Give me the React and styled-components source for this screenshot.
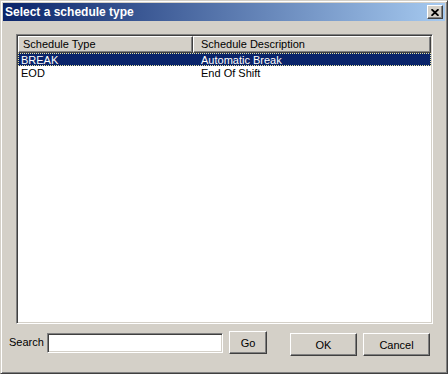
import React from 'react'
import styled, { createGlobalStyle } from 'styled-components'

const GlobalStyle = createGlobalStyle`
  html, body {
    margin: 0;
    padding: 0;
    background: #d4d0c8;
    font-family: "Liberation Sans", Arial, sans-serif;
  }
`;

const Window = styled.div`
  width: 448px;
  height: 374px;
  box-sizing: border-box;
  background: #d4d0c8;
  border: 1px solid;
  border-color: #d4d0c8 #404040 #404040 #d4d0c8;
  box-shadow: inset 1px 1px #ffffff, inset -1px -1px #808080;
  padding: 2px;
  display: flex;
  flex-direction: column;
`;

const TitleBar = styled.div`
  height: 18px;
  flex: none;
  display: flex;
  align-items: center;
  justify-content: space-between;
  padding: 0 2px 0 2px;
  background: linear-gradient(to right, #0a246a, #a6caf0);
`;

const Title = styled.span`
  color: #ffffff;
  font-weight: bold;
  font-size: 12px;
  line-height: 18px;
`;

const CloseButton = styled.div`
  width: 16px;
  height: 14px;
  box-sizing: border-box;
  background: #d4d0c8;
  border: 1px solid;
  border-color: #ffffff #404040 #404040 #ffffff;
  box-shadow: inset -1px -1px #808080;
  display: flex;
  align-items: center;
  justify-content: center;
  padding-right: 1px;
`;

const Body = styled.div`
  padding: 13px 12px 0 13px;
`;

const ListBox = styled.div`
  height: 290px;
  box-sizing: border-box;
  background: #ffffff;
  border: 1px solid;
  border-color: #808080 #ffffff #ffffff #808080;
  box-shadow: inset 1px 1px #404040, inset -1px -1px #d4d0c8;
  padding: 1px;
`;

const Header = styled.div`
  display: flex;
  height: 17px;
`;

const HeaderCell = styled.div`
  width: ${p => p.$width}px;
  box-sizing: border-box;
  background: #d4d0c8;
  border: 1px solid;
  border-color: #ffffff #404040 #404040 #ffffff;
  box-shadow: inset -1px -1px #808080;
  padding-left: ${p => p.$pad}px;
  font-size: 11px;
  line-height: 15px;
  color: #000;
  white-space: nowrap;
`;

const Row = styled.div`
  display: flex;
  height: 13px;
  box-sizing: border-box;
  font-size: 11px;
  line-height: 12px;
  background: ${p => (p.$selected ? '#0a246a' : 'transparent')};
  color: ${p => (p.$selected ? '#ffffff' : '#000000')};
  border: 1px dotted ${p => (p.$selected ? '#e8e4a0' : 'transparent')};
`;

const Cell = styled.div`
  width: ${p => p.$width}px;
  box-sizing: border-box;
  padding-left: ${p => p.$pad}px;
  white-space: nowrap;
`;

const Footer = styled.div`
  display: flex;
  align-items: flex-start;
  padding: 7px 0 0 6px;
`;

const Label = styled.span`
  width: 38px;
  flex: none;
  font-size: 11px;
  margin-top: 5px;
  line-height: 13px;
`;

const Input = styled.input`
  width: 176px;
  height: 20px;
  box-sizing: border-box;
  margin: 2px 0 0 0;
  border: 1px solid;
  border-color: #808080 #ffffff #ffffff #808080;
  box-shadow: inset 1px 1px #404040, inset -1px -1px #d4d0c8;
  background: #fff;
  outline: none;
  padding: 0 3px;
  font-family: "Liberation Sans", Arial, sans-serif;
  font-size: 11px;
`;

const Button = styled.button`
  width: ${p => p.$width}px;
  height: 23px;
  box-sizing: border-box;
  margin-left: ${p => p.$gap}px;
  margin-top: ${p => p.$top}px;
  padding: 0;
  background: #d4d0c8;
  border: 1px solid;
  border-color: #ffffff #404040 #404040 #ffffff;
  box-shadow: inset -1px -1px #808080;
  font-family: "Liberation Sans", Arial, sans-serif;
  font-size: 11px;
  color: #000;
`;

const rows = [
  { type: 'BREAK', desc: 'Automatic Break' },
  { type: 'EOD', desc: 'End Of Shift' },
];

export default function App() {
  return (
    <>
      <GlobalStyle />
      <Window>
        <TitleBar>
          <Title>Select a schedule type</Title>
          <CloseButton>
            <svg width="8" height="7" viewBox="0 0 8 7">
              <path d="M0.5 0.2 L7.5 6.8 M7.5 0.2 L0.5 6.8" stroke="#000" strokeWidth="1.8" />
            </svg>
          </CloseButton>
        </TitleBar>
        <Body>
          <ListBox>
            <Header>
              <HeaderCell $width={175} $pad={4}>Schedule Type</HeaderCell>
              <HeaderCell $width={238} $pad={7}>Schedule Description</HeaderCell>
            </Header>
            {rows.map((r, i) => (
              <Row key={r.type} $selected={i === 0}>
                <Cell $width={180} $pad={2}>{r.type}</Cell>
                <Cell $width={230} $pad={2}>{r.desc}</Cell>
              </Row>
            ))}
          </ListBox>
        </Body>
        <Footer>
          <Label>Search</Label>
          <Input />
          <Button $width={38} $gap={6} $top={0}>Go</Button>
          <Button $width={67} $gap={23} $top={2}>OK</Button>
          <Button $width={67} $gap={6} $top={2}>Cancel</Button>
        </Footer>
      </Window>
    </>
  )
}
